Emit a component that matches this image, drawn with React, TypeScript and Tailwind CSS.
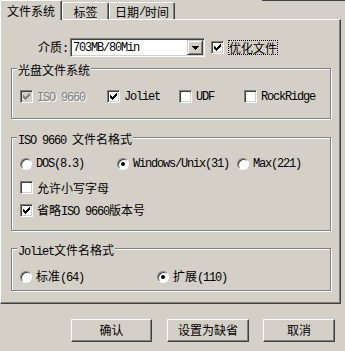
import type { ReactNode } from 'react';

// Latin text in the dialog uses a 6px-wide mono face
function L({ children }: { children: ReactNode }) {
  return <span className="font-['Liberation_Mono',monospace] tracking-[-1.2px]">{children}</span>;
}

function CheckMark({ color }: { color: string }) {
  return (
    <svg width="7" height="7" viewBox="0 0 7 7" shapeRendering="crispEdges">
      <path
        fill={color}
        d="M6 0h1v1h-1z M5 1h2v1h-2z M0 2h1v1h-1z M4 2h3v1h-3z M0 3h2v1h-2z M3 3h3v1h-3z M0 4h5v1h-5z M1 5h3v1h-3z M2 6h1v1h-1z"
      />
    </svg>
  );
}

function Check({ checked, disabled }: { checked?: boolean; disabled?: boolean }) {
  return (
    <span
      className={`flex h-[13px] w-[13px] shrink-0 items-center justify-center border border-b-white border-l-[#808080] border-r-white border-t-[#808080] shadow-[inset_1px_1px_0_#404040,inset_-1px_-1px_0_#d4d0c8] ${
        disabled ? 'bg-[#d4d0c8]' : 'bg-white'
      }`}
    >
      {checked && <CheckMark color={disabled ? '#808080' : '#000'} />}
    </span>
  );
}

function Radio({ checked }: { checked?: boolean }) {
  return (
    <span className="flex h-[12px] w-[12px] shrink-0 items-center justify-center rounded-full border border-b-white border-l-[#808080] border-r-white border-t-[#808080] bg-white shadow-[inset_1px_1px_0_#404040]">
      {checked && <span className="h-[4px] w-[4px] rounded-full bg-black" />}
    </span>
  );
}

function Group({ title, className, children }: { title: ReactNode; className: string; children: ReactNode }) {
  return (
    <div
      className={`relative ml-[10px] w-[320px] border border-[#808080] shadow-[inset_1px_1px_0_#fff,1px_1px_0_#fff] ${className}`}
    >
      <span className="absolute left-[5px] top-[-6px] bg-[#d4d0c8] px-[1px] leading-[14px]">{title}</span>
      {children}
    </div>
  );
}

function Button({ w, children }: { w: string; children: ReactNode }) {
  return (
    <div
      className={`flex h-[23px] items-center justify-center border border-b-[#404040] border-l-white border-r-[#404040] border-t-white pb-[2px] shadow-[inset_-1px_-1px_0_#808080] ${w}`}
    >
      {children}
    </div>
  );
}

export default function App() {
  return (
    <div className="h-[351px] w-[345px] overflow-hidden bg-[#d4d0c8] font-['Noto_Sans_CJK_SC',sans-serif] text-[12px] leading-[14px] text-black">
      {/* Tabs */}
      <div className="flex items-end">
        <div className="relative z-10 -mb-px flex h-[20px] w-[62px] items-center justify-center rounded-t-[2px] border-l border-r border-t border-l-white border-r-[#404040] border-t-white bg-[#d4d0c8] shadow-[inset_-1px_0_0_#808080]">
          文件系统
        </div>
        <div className="flex h-[17px] w-[47px] items-center justify-center rounded-t-[2px] border-l border-r border-t border-l-white border-r-[#404040] border-t-white pt-[1px] shadow-[inset_-1px_0_0_#808080]">
          标签
        </div>
        <div className="flex h-[17px] w-[66px] items-center justify-center rounded-t-[2px] border-l border-r border-t border-l-white border-r-[#404040] border-t-white pt-[1px] shadow-[inset_-1px_0_0_#808080]">
          日期<L>/</L>时间
        </div>
        <div className="ml-[87px] h-px flex-1 self-start bg-[#404040]" />
      </div>

      {/* Tab panel */}
      <div className="h-[285px] w-[341px] border-b border-l border-r border-t border-b-[#404040] border-l-white border-r-[#404040] border-t-white shadow-[inset_-1px_-1px_0_#808080]">
        <div className="ml-[37px] mt-[18px] flex h-[19px] items-center">
          <span className="w-[32px]">
            介质<L>:</L>
          </span>
          <div className="flex h-[19px] w-[135px] border border-b-white border-l-[#808080] border-r-white border-t-[#808080] bg-white p-[1px] shadow-[inset_1px_1px_0_#404040,inset_-1px_-1px_0_#d4d0c8]">
            <span className="flex flex-1 items-center pl-[1px]">
              <L>703MB/80Min</L>
            </span>
            <span className="flex w-[16px] items-center justify-center border border-b-[#404040] border-l-[#d4d0c8] border-r-[#404040] border-t-[#d4d0c8] bg-[#d4d0c8] shadow-[inset_1px_1px_0_#fff,inset_-1px_-1px_0_#808080]">
              <svg width="7" height="4" viewBox="0 0 7 4" shapeRendering="crispEdges">
                <path d="M0 0h7v1H0z M1 1h5v1H1z M2 2h3v1H2z M3 3h1v1H3z" fill="#000" />
              </svg>
            </span>
          </div>
          <span className="ml-[6px]">
            <Check checked />
          </span>
          <span className="ml-[4px] border border-dotted border-black px-0 leading-[13px]">优化文件</span>
        </div>

        <Group title="光盘文件系统" className="mt-[11px] h-[51px] pl-[8px] pt-[21px]">
          <div className="flex h-[13px] items-center">
            <div className="flex w-[87px] items-center gap-[4px]">
              <Check checked disabled />
              <span className="text-[#808080] [text-shadow:1px_1px_0_#fff]">
                <L>ISO 9660</L>
              </span>
            </div>
            <div className="flex w-[72px] items-center gap-[4px]">
              <Check checked />
              <L>Joliet</L>
            </div>
            <div className="flex w-[65px] items-center gap-[4px]">
              <Check />
              <L>UDF</L>
            </div>
            <div className="flex items-center gap-[4px]">
              <Check />
              <L>RockRidge</L>
            </div>
          </div>
        </Group>

        <Group
          title={
            <>
              <L>ISO 9660 </L>文件名格式
            </>
          }
          className="mt-[18px] h-[94px] pl-[8px] pt-[19px]"
        >
          <div className="flex h-[13px] items-center">
            <div className="flex w-[97px] items-center gap-[4px]">
              <Radio />
              <L>DOS(8.3)</L>
            </div>
            <div className="flex w-[120px] items-center gap-[4px]">
              <Radio checked />
              <L>Windows/Unix(31)</L>
            </div>
            <div className="flex items-center gap-[4px]">
              <Radio />
              <L>Max(221)</L>
            </div>
          </div>
          <div className="mt-[11px] flex h-[13px] items-center gap-[4px]">
            <Check />
            <span>允许小写字母</span>
          </div>
          <div className="mt-[10px] flex h-[13px] items-center gap-[4px]">
            <Check checked />
            <span>
              省略<L>ISO 9660</L>版本号
            </span>
          </div>
        </Group>

        <Group
          title={
            <>
              <L>Joliet</L>文件名格式
            </>
          }
          className="mt-[17px] h-[43px] pl-[8px] pt-[21px]"
        >
          <div className="flex h-[13px] items-center">
            <div className="flex w-[137px] items-center gap-[4px]">
              <Radio />
              <span>
                标准<L>(64)</L>
              </span>
            </div>
            <div className="flex items-center gap-[4px]">
              <Radio checked />
              <span>
                扩展<L>(110)</L>
              </span>
            </div>
          </div>
        </Group>
      </div>

      {/* Dialog buttons */}
      <div className="ml-[71px] mt-[15px] flex">
        <Button w="w-[81px]">确认</Button>
        <div className="w-[15px]" />
        <Button w="w-[82px]">设置为缺省</Button>
        <div className="w-[14px]" />
        <Button w="w-[72px]">取消</Button>
      </div>
    </div>
  );
}
